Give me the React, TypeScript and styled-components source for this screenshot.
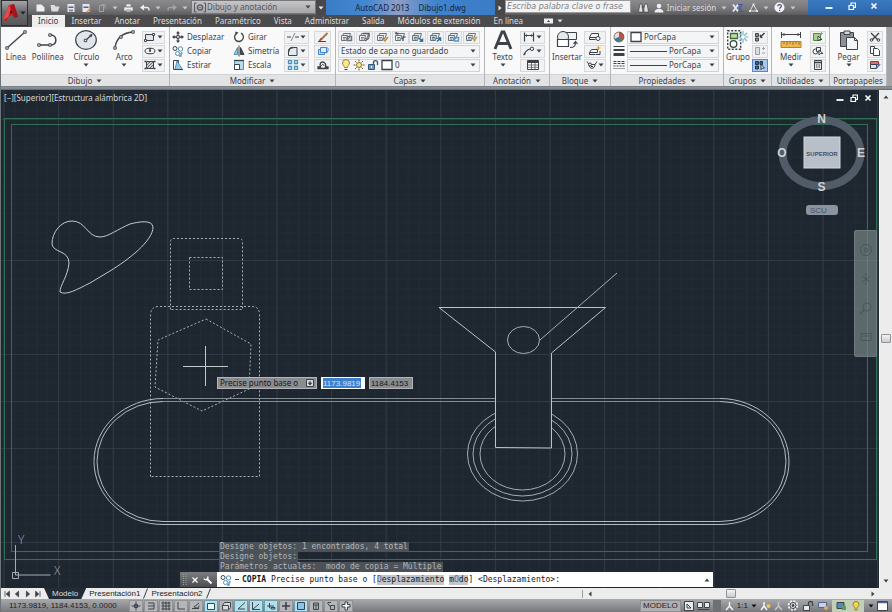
import React from "react";
import styled, { createGlobalStyle, css } from "styled-components";

const UI = `"Noto Sans", "Open Sans", sans-serif`;
const PLAIN = `"Liberation Sans", Arial, sans-serif`;
const MONO = `"DejaVu Sans Mono", monospace`;
const INK = "#3d4248";
const BLUE = "#4f93bd";

const Global = createGlobalStyle`
  * { box-sizing: border-box; }
  html, body { margin: 0; padding: 0; }
  body { font-family: ${UI}; font-size: 8px; line-height: 12px; color: ${INK}; background: #1e2630; }
  button, input, select { font: inherit; color: inherit; margin: 0; padding: 0; border: 0; background: none; border-radius: 0; }
  button { cursor: pointer; }
  svg { display: block; flex: none; }
`;

/* ---------- icons ---------- */

const Svg = ({ w = 14, h = 12, vb, children }: { w?: number; h?: number; vb?: string; children: React.ReactNode }) => (
  <svg width={w} height={h} viewBox={vb ?? `0 0 ${w} ${h}`} fill="none" stroke={INK} strokeWidth="1" aria-hidden="true">
    {children}
  </svg>
);

const Caret = ({ color = INK }: { color?: string }) => (
  <Svg w={6} h={4}>
    <path d="M0.5 0.5h5L3 3.5z" fill={color} stroke="none" />
  </Svg>
);

const icons = {
  line: (
    <Svg w={22} h={20}>
      <path d="M2 18L20 2" strokeWidth="1.3" />
      <path d="M0.8 16.8h2.4v2.4H0.8zM18.8 0.8h2.4v2.4h-2.4z" fill="#fff" />
    </Svg>
  ),
  pline: (
    <Svg w={22} h={20}>
      <path d="M2 15h12c7 0 6-10 0-10" strokeWidth="1.5" />
      <path d="M0.8 13.8h2.4v2.4H0.8zM11.8 13.8h2.4v2.4h-2.4zM11.8 3.8h2.4v2.4h-2.4z" fill="#fff" />
    </Svg>
  ),
  circle: (
    <Svg w={22} h={20}>
      <ellipse cx="11" cy="10" rx="10.3" ry="9.3" fill="#dfe5ea" strokeWidth="1.2" />
      <path d="M10.5 10.5L17 4.5" strokeWidth="1.2" />
      <path d="M17.5 4l-3.5 1 2.5 2.2z" fill={INK} stroke="none" />
      <path d="M9.3 9.3h2.4v2.4H9.3z" fill="#fff" />
    </Svg>
  ),
  arc: (
    <Svg w={22} h={20}>
      <path d="M2 18C3 9 9 3 20 2" strokeWidth="1.4" />
      <path d="M0.8 16.8h2.4v2.4H0.8zM6.8 5.8h2.4v2.4H6.8zM18.8 0.8h2.4v2.4h-2.4z" fill="#fff" />
    </Svg>
  ),
  rect: (
    <Svg w={12} h={10}>
      <path d="M1.5 2.5h8v6h-8z" fill="#dfe5ea" />
      <path d="M0.5 7.5h2v2h-2zM8.5 1.5h2v2h-2z" fill="#fff" />
    </Svg>
  ),
  ellipse: (
    <Svg w={12} h={10}>
      <ellipse cx="6" cy="5" rx="5" ry="2.8" />
      <path d="M6 5V2M5 5h2" strokeWidth="1.5" />
    </Svg>
  ),
  hatch: (
    <Svg w={12} h={10}>
      <path d="M2.5 1.5h7v7h-7z" fill="#c9ced3" />
      <path d="M3 5l3-3M3 8l6-6M6 8l3-3" strokeWidth="0.7" />
      <path d="M0.5 8.5h2M9.5 8.5h2M0.5 1.5h2M9.5 1.5h2" strokeWidth="1.5" />
    </Svg>
  ),
  move: (
    <Svg w={12} h={12}>
      <path d="M6 1v10M1 6h10" strokeWidth="1.3" />
      <path d="M6 0l2 2.5H4zM6 12l2-2.5H4zM0 6l2.5-2v4zM12 6L9.5 4v4z" fill={INK} stroke="none" />
      <path d="M4.7 4.7h2.6v2.6H4.7z" fill="#fff" />
    </Svg>
  ),
  copy: (
    <Svg w={12} h={12}>
      <circle cx="3" cy="3.5" r="2" />
      <circle cx="8.5" cy="4" r="2.2" stroke={BLUE} />
      <circle cx="5.5" cy="8.5" r="2" stroke={BLUE} />
      <path d="M9 8v3h-2M9 8h1.5" stroke={BLUE} strokeWidth="1.3" />
    </Svg>
  ),
  stretch: (
    <Svg w={12} h={12}>
      <path d="M1.5 1.5h5v9h-5z" />
      <path d="M5 2l5.5 8.5H3z" fill="#9cc7dd" stroke={BLUE} />
      <path d="M2 10.5h9" />
    </Svg>
  ),
  rotate: (
    <Svg w={12} h={12}>
      <path d="M8 2.2A4.4 4.4 0 1 1 3.5 2.5" strokeWidth="1.3" />
      <path d="M2 0.5l3.5 1L3 4z" fill={INK} stroke="none" />
    </Svg>
  ),
  mirror: (
    <Svg w={12} h={12}>
      <path d="M4.5 2.5v7H1z" fill="#9cc7dd" stroke={BLUE} />
      <path d="M7.5 2.5v7H11z" fill="#40505c" />
      <path d="M6 0.5v11" />
    </Svg>
  ),
  scale: (
    <Svg w={12} h={12}>
      <path d="M1.5 1.5h9v9h-9z" fill="#b9dbe8" stroke={BLUE} />
      <path d="M1.5 5.5h5v5h-5z" fill="#fff" />
      <path d="M1 1.5h10" strokeWidth="1.3" />
    </Svg>
  ),
  trim: (
    <Svg w={12} h={10}>
      <path d="M0 5h4M8 5h4" strokeWidth="1.2" />
      <path d="M4 9l4-8" stroke="#7b8792" />
    </Svg>
  ),
  fillet: (
    <Svg w={12} h={10}>
      <path d="M1.5 9.5V6c0-3 2-4.5 5-4.5h3.5v8z" fill="#e4e9ed" />
      <path d="M1.5 6c0-3 2-4.5 5-4.5" strokeWidth="1.4" />
    </Svg>
  ),
  array: (
    <Svg w={12} h={10}>
      <path d="M1.5 0.5h3v3h-3zM7.5 0.5h3v3h-3zM1.5 6.5h3v3h-3zM7.5 6.5h3v3h-3z" stroke={BLUE} strokeWidth="1.3" />
    </Svg>
  ),
  erase: (
    <Svg w={12} h={10}>
      <path d="M10.5 1L4 7.5" stroke="#a9764a" strokeWidth="2" />
      <path d="M4.5 6.5L2.5 9" stroke="#b34545" strokeWidth="2" />
      <path d="M1 9.5h8" />
    </Svg>
  ),
  explode: (
    <Svg w={12} h={10}>
      <path d="M1.5 3.5h6v5h-6z" fill="#bcdcf0" stroke="#3e86c8" />
      <path d="M3.5 1.5h6v5h-6z" fill="#dceefa" stroke="#3e86c8" />
      <path d="M10.5 1.500c1.500 2 0 5-1.500 6" stroke="#3e86c8" />
    </Svg>
  ),
  offset: (
    <Svg w={12} h={10}>
      <path d="M1 8.5h10V7H8.5c1-3-1-5-3-5s-3 2-2 5H1z" strokeWidth="1.3" />
      <path d="M4.500 6c0-2 2.500-2 2.500 0" />
    </Svg>
  ),
  bulb: (
    <Svg w={10} h={12}>
      <path d="M3.5 8.5C3.5 7 1.5 6 1.5 4a3.5 3.5 0 0 1 7 0c0 2-2 3-2 4.5z" fill="#fbe88a" stroke="#8f8a4a" />
      <path d="M3.5 10.5h3" />
    </Svg>
  ),
  sun: (
    <Svg w={12} h={12}>
      <circle cx="6" cy="6" r="2.5" fill="#fbe88a" stroke="#8a7530" />
      <path d="M6 0.5v2M6 9.5v2M0.5 6h2M9.5 6h2M2 2l1.5 1.5M8.5 8.5L10 10M10 2L8.5 3.5M3.5 8.5L2 10" stroke="#6e6030" />
    </Svg>
  ),
  lock: (
    <Svg w={12} h={12}>
      <path d="M1.5 5.5h6v5h-6z" fill="#6f9bc0" stroke="#37566f" />
      <path d="M6.5 5V3.5c0-2.5 4-2.5 4 0V6" strokeWidth="1.3" stroke="#37566f" />
      <path d="M4.5 7v2" stroke="#fff" />
    </Svg>
  ),
  swatch: (
    <Svg w={12} h={12}>
      <path d="M1 1.5h10v9H1z" fill="#fff" strokeWidth="1.3" />
    </Svg>
  ),
  textA: (
    <Svg w={22} h={20}>
      <path d="M3 19L10 2h2l7 17M6 13.500h10" strokeWidth="2.8" />
    </Svg>
  ),
  dim: (
    <Svg w={12} h={10}>
      <path d="M1.5 0.5v9M10.5 0.5v9M1.5 3.5h9" strokeWidth="1.2" />
      <path d="M2 3.5l2-1.5v3zM10 3.5L8 2v3z" fill={INK} stroke="none" />
    </Svg>
  ),
  leader: (
    <Svg w={12} h={10}>
      <path d="M1 9C2 6 3 4 7 3" strokeWidth="1.2" />
      <circle cx="9" cy="2.8" r="1.7" />
      <path d="M0.500 9.500l.5-3 2 1.5z" fill={INK} stroke="none" />
    </Svg>
  ),
  table: (
    <Svg w={12} h={10}>
      <path d="M0.5 0.5h11v9h-11z" fill="#fff" />
      <path d="M1 2h10" strokeWidth="2" />
      <path d="M1 5h10M1 7.300h10M4.5 3v6M8 3v6" strokeWidth="0.700" />
    </Svg>
  ),
  insert: (
    <Svg w={22} h={20}>
      <path d="M8.5 2.5h12v7h-12z" fill="#f2f3f4" />
      <circle cx="7" cy="7" r="5.500" fill="#e4e9ed" />
      <path d="M1.500 9.500h11v7h-11z" fill="#fff" strokeWidth="1.200" />
      <path d="M14 17.500c4 0 5.500-1 5.500-5M17.500 14l2-2.500 2 2.500" strokeWidth="1.200" />
    </Svg>
  ),
  blockA: (
    <Svg w={12} h={10}>
      <path d="M2.500 1.500h7v4h-9z" fill="#f2f3f4" />
      <circle cx="9" cy="6.500" r="2" fill="#fff" />
      <path d="M0.500 5.500v2h6" />
    </Svg>
  ),
  blockB: (
    <Svg w={12} h={10}>
      <path d="M2.500 3.500h6v3h-8z" fill="#f2f3f4" />
      <path d="M7 8.500h4V5M0.500 6.500v2h6" />
      <path d="M9.500 0v4M7.500 2h4" stroke="#d79a2b" />
    </Svg>
  ),
  blockC: (
    <Svg w={12} h={10}>
      <path d="M1 1.500l2 3h6l2-3M3 4.500c0 5 6 5 6 0M5 6.500h2" />
      <circle cx="4" cy="4.500" r="1.500" fill="#d9dee2" />
    </Svg>
  ),
  wheel: (
    <Svg w={12} h={12}>
      <circle cx="6" cy="6" r="5" fill="#4d8a55" stroke="none" />
      <path d="M6 6V1a5 5 0 0 1 4.500 7z" fill="#cf4a3f" stroke="none" />
      <path d="M6 6L1.500 8A5 5 0 0 1 6 1z" fill="#e4dfda" stroke="none" />
      <path d="M6 6L1.500 8a5 5 0 0 0 5 3z" fill="#4873a8" stroke="none" />
      <circle cx="6" cy="6" r="5" stroke="#6a5a55" strokeWidth="0.700" />
    </Svg>
  ),
  weight: (
    <Svg w={12} h={12}>
      <path d="M0.500 1.500h11" />
      <path d="M0.500 5h11" strokeWidth="2" />
      <path d="M0.500 9.500h11" strokeWidth="3" />
    </Svg>
  ),
  ltype: (
    <Svg w={12} h={12}>
      <path d="M0.500 2.500h11M0.500 4.500h11" strokeDasharray="3 1" />
      <path d="M0.500 7h11" strokeDasharray="2 1" />
      <path d="M0.500 9.500h11" strokeDasharray="1 1" />
    </Svg>
  ),
  group: (
    <Svg w={22} h={20}>
      <path d="M0.700 0.700h13v18.600h-13z" strokeDasharray="2 1.500" strokeWidth="1.400" />
      <path d="M3.500 3.500h7v5h-7z" fill="#bfe0a5" stroke="#3f6a38" strokeWidth="1.300" />
      <circle cx="6.500" cy="14" r="3.300" strokeWidth="1.300" />
      <path d="M16 1v12M10.500 7h11M12 3l8 8M20 3l-8 8" stroke="#7cb8c9" strokeWidth="1.200" />
      <circle cx="16" cy="7" r="1.800" fill="#fff" stroke="none" />
    </Svg>
  ),
  ungroup: (
    <Svg w={12} h={10}>
      <path d="M1.500 1.500h3v3h-3zM1.500 6h3v3h-3z" fill="#8b9196" />
      <path d="M10.500 1L6 5.500M6 3l2 3" strokeWidth="1.500" />
    </Svg>
  ),
  groupEdit: (
    <Svg w={12} h={10}>
      <path d="M1.500 1.500h4v7h-4z" stroke="#9aa0a5" fill="#d9dcdf" />
      <path d="M8 2.500h3M8 7h3M9.500 1v3" stroke="#9aa0a5" />
    </Svg>
  ),
  groupSel: (
    <Svg w={12} h={10}>
      <path d="M1.500 1.500h3v3h-3zM1.500 6h3v3h-3zM6 1.500h2.500v3H6z" fill="#48607e" stroke="#24364c" />
      <path d="M7 4.500v5l1.500-1.500h2z" fill="#fff" stroke="#24364c" />
    </Svg>
  ),
  measure: (
    <Svg w={22} h={20}>
      <path d="M1.500 2v6M20.500 2v6M2 4.500h18" />
      <path d="M1.500 4.500l3-1.500v3zM20.500 4.500l-3-1.500v3z" fill={INK} stroke="none" />
      <path d="M1 11.500h20v6H1z" fill="#efb84c" stroke="#b9822a" />
      <path d="M4 12v2M7 12v3M10 12v2M13 12v3M16 12v2M19 12v3" stroke="#8a5e18" strokeWidth="0.800" />
    </Svg>
  ),
  qselect: (
    <Svg w={12} h={10}>
      <path d="M1.500 1.500h7v7h-7z" fill="#a9d08e" stroke="#4f8a3c" />
      <path d="M6 4v5l1.500-1.500H10z" fill="#fff" />
      <path d="M9.500 0v3M8 1.500h3" stroke="#d79a2b" />
    </Svg>
  ),
  selectAll: (
    <Svg w={12} h={10}>
      <circle cx="3.500" cy="5.500" r="2.500" />
      <path d="M4.500 1.500h4v4h-4z" fill="#eef0f2" />
      <path d="M7 4v5l1.500-1.500H11z" fill="#fff" />
    </Svg>
  ),
  calc: (
    <Svg w={12} h={10}>
      <path d="M2.500 0.500h7v9h-7z" fill="#e4e7ea" />
      <path d="M3 2.500h6" strokeWidth="1.500" />
      <path d="M4 5h4M4 7h4" strokeDasharray="1 0.500" />
    </Svg>
  ),
  paste: (
    <Svg w={22} h={20}>
      <path d="M2.500 2.500h13v14h-13z" fill="#8d9196" />
      <path d="M6 1h6v3.500H6z" fill="#d5d8db" />
      <path d="M8.500 7.500h8l3 3v9h-11z" fill="#f3f4f6" />
      <path d="M16.500 7.500v3h3" />
    </Svg>
  ),
  cut: (
    <Svg w={12} h={10}>
      <path d="M2 1l7 7M10 1L3 8" strokeWidth="1.400" />
      <circle cx="2.500" cy="8" r="1.300" />
      <circle cx="9.500" cy="8" r="1.300" />
    </Svg>
  ),
  copyClip: (
    <Svg w={12} h={10}>
      <path d="M1.500 0.500h4v7h-4z" fill="#fff" />
      <path d="M4.500 2.500h4l2 2v5h-6z" fill="#fff" />
    </Svg>
  ),
  matchProp: (
    <Svg w={12} h={10}>
      <path d="M1.500 1.500h8v3h-8z" fill="#d8726a" stroke="#8c3d38" />
      <path d="M1.500 4.500h6v4h-6z" fill="#d9e4ee" />
      <path d="M11 4L7 8.500" stroke="#4a79b5" strokeWidth="1.800" />
    </Svg>
  ),
};

const layers: { name: string; mark: string; accent: string; sheet?: string }[] = [
  { name: "Propiedades de capas", mark: "M7.500 4.500h4v4h-4z", accent: "#6d757c" },
  { name: "Aislar", mark: "M5 1.500h6v4M7 9l4-3", accent: "#55606a" },
  { name: "Hacer objeto actual", mark: "M7 7l2 2 3-4", accent: "#c8872b" },
  { name: "Igualar capa", mark: "M1 1.500h4M1 1.500l2-1M9 9V5h2.500", accent: "#55606a" },
  { name: "Inutilizar capa", mark: "M8 6l3 3M11.500 6.500v3h-3", accent: "#2d6f9d", sheet: "#c4e0ea" },
  { name: "Desactivar capa", mark: "M8 9.500L11.500 6M11.500 9V6H9", accent: "#2d6f9d", sheet: "#c4e0ea" },
  { name: "Bloquear capa", mark: "M7.500 5.500h4v3.500h-4z", accent: "#5a95c9", sheet: "#dcecf6" },
  { name: "Desbloquear capa", mark: "M8 5.500h3.500L9.500 9z", accent: "#c4a85a", sheet: "#dcecf6" },
];

const LayerIcon = ({ layer }: { layer: (typeof layers)[number] }) => (
  <Svg w={13} h={10}>
    <path d="M3.500 1.500h7l-1.500 5h-7z" fill="#e9edf0" stroke="#6a727a" />
    <path d="M1.500 3.500h6l-1 5h-5z" fill={layer.sheet ?? "#f5f6f7"} stroke="#6a727a" />
    <path d="M3 5.500h3M3 7h2.500" strokeWidth="0.700" />
    <path d={layer.mark} stroke={layer.accent} strokeWidth="1.500" />
  </Svg>
);

/* ---------- frame ---------- */

const Shell = styled.div`
  min-height: 100vh;
  display: flex;
  flex-direction: column;
  border-left: 1px solid #6f7479;
  overflow: hidden;
`;

const Header = styled.header`
  display: flex;
  height: 27px;
  background: #4b4b4e;
`;

const AppButton = styled.button`
  width: 27px;
  height: 26px;
  display: flex;
  align-items: center;
  justify-content: center;
  gap: 1px;
  border: 1px solid #2e2e30;
  background: linear-gradient(#a5a5a8, #6c6c70 45%, #58585b);
`;

const HeaderRows = styled.div`
  flex: 1;
  min-width: 0;
`;

const TitleBar = styled.div`
  height: 15px;
  display: flex;
  align-items: stretch;
  background: linear-gradient(#8b8b8e, #77777b 60%, #5b5b5e);
`;

const QuickAccess = styled.div`
  width: 163px;
  padding: 0 3px 0 7px;
  display: flex;
  align-items: center;
  justify-content: space-between;
`;

const IconButton = styled.button`
  display: flex;
  align-items: center;
  justify-content: center;
`;

const Workspace = styled.label`
  width: 125px;
  height: 14px;
  padding: 0 4px 0 2px;
  display: flex;
  align-items: center;
  gap: 1px;
  border: 1px solid #77777a;
  background: linear-gradient(#c6c6c8, #a6a6aa);
  color: #55585c;
`;

const PlainSelect = styled.select`
  appearance: none;
  flex: 1;
  min-width: 0;
  height: 12px;
  line-height: 12px;
  outline: 0;
`;

const DarkArrow = styled.button`
  width: 10px;
  display: flex;
  align-items: center;
  justify-content: center;
  background: #48484b;
`;

const Caption = styled.div`
  flex: 172 1 0;
  display: flex;
  align-items: center;
  justify-content: center;
  gap: 9px;
  color: #14233c;
  white-space: nowrap;
  background: linear-gradient(90deg, #3a7cc4, #4588d2 25%, #8d9ec4 42%, #3f83d0 65%, #3a7cc4);
`;

const Search = styled.input`
  flex: 124 1 0;
  min-width: 0;
  height: 13px;
  padding: 0 1px;
  background: #f3f3f4;
  border: 1px solid #9a9a9d;
  font-family: "DejaVu Sans", sans-serif;
  font-style: italic;
  &::placeholder { color: #7e8084; opacity: 1; }
`;

const Account = styled.div`
  width: 177px;
  padding: 0 12px 0 7px;
  display: flex;
  align-items: center;
  justify-content: space-between;
`;

const SignIn = styled.button`
  display: flex;
  align-items: center;
  gap: 3px;
  color: #dcdcde;
  white-space: nowrap;
`;

const WindowControls = styled.div`
  width: 84px;
  padding: 0 14px 4px 17px;
  display: flex;
  align-items: center;
  justify-content: space-between;
  background: linear-gradient(#3b7ac0, #2c66ab);
`;

const Tabs = styled.nav`
  height: 12px;
  padding-left: 4px;
  display: flex;
  color: #dededf;
`;

const Tab = styled.button<{ $active?: boolean }>`
  height: 12px;
  padding: 0 7px 0 6px;
  white-space: nowrap;
  line-height: 12px;
  ${(p) => p.$active && css`background: #ededee; color: #3a3d41;`}
`;

const TabMenu = styled.button`
  margin-left: 14px;
  display: flex;
  align-items: center;
  gap: 4px;
`;

/* ---------- ribbon ---------- */

const Ribbon = styled.div`
  display: grid;
  grid-template-columns: 169fr 166fr 149fr 65fr 61fr 113fr 48fr 58fr 57fr 5px;
  height: 59px;
  background: #a3a5a8;
`;

const RibbonEdge = styled.div`
  height: 4px;
  background: linear-gradient(#777b80, #8f979f 50%, #59616a);
`;

const Panel = styled.section`
  min-width: 0;
  display: flex;
  flex-direction: column;
  border-right: 1px solid #b4b6b9;
  background: #f9f9fa;
`;

const PanelBody = styled.div`
  height: 47px;
  padding: 3px 4px 2px 2px;
  display: flex;
  justify-content: space-between;
  gap: 2px;
`;

const PanelTitle = styled.div`
  height: 12px;
  padding: 0 3px;
  display: flex;
  align-items: center;
  justify-content: center;
  background: #e2e3e5;
  border-top: 1px solid #d2d3d5;
  white-space: nowrap;
`;

const TitleText = styled.button`
  display: flex;
  align-items: center;
  gap: 4px;
  line-height: 11px;
`;

const BigButton = styled.button<{ $w: number }>`
  width: ${(p) => p.$w}px;
  display: flex;
  flex-direction: column;
  align-items: center;
  justify-content: flex-start;
  white-space: nowrap;
`;

const BigLabel = styled.span`
  height: 13px;
  line-height: 14px;
`;

const Stack = styled.div<{ $w: number }>`
  width: ${(p) => p.$w}px;
  display: grid;
  grid-template-rows: repeat(3, 14px);
  align-items: center;
`;

const SmallButton = styled.button<{ $on?: boolean }>`
  height: 13px;
  padding: 0 1px;
  display: flex;
  align-items: center;
  justify-content: space-evenly;
  background: ${(p) => (p.$on ? "#a9c8ef" : "#f1f2f3")};
  border: 1px solid ${(p) => (p.$on ? "#5c86bd" : "#d6d8db")};
`;

const Command = styled.button`
  height: 14px;
  display: flex;
  align-items: center;
  gap: 3px;
  white-space: nowrap;
`;

const Grow = styled.div`
  flex: 1;
  min-width: 0;
  display: grid;
  grid-template-rows: repeat(3, 14px);
  align-items: center;
`;

const IconRow = styled.div`
  display: flex;
  justify-content: space-between;
`;

const Combo = styled.label`
  height: 13px;
  padding: 0 3px 0 2px;
  display: flex;
  align-items: center;
  gap: 2px;
  border: 1px solid #d0d2d5;
  background: #f4f5f6;
`;

const WeightLine = styled.span`
  flex: 1;
  height: 1px;
  background: #3d4248;
`;

const FitSelect = styled(PlainSelect)`
  flex: none;
  width: 38px;
`;

/* ---------- drawing area ---------- */

const Workarea = styled.div`
  flex: 1;
  display: flex;
  min-height: 0;
`;

const Canvas = styled.main`
  position: relative;
  flex: 1;
  min-width: 0;
  overflow: hidden;
  background: #1e2630;
`;

const Drawing = styled.svg`
  width: 100%;
  height: 100%;
`;

const ViewLabel = styled.button`
  position: absolute;
  left: 3px;
  top: 2px;
  color: #d4d8dc;
  white-space: nowrap;
`;

const DocControls = styled.div`
  position: absolute;
  top: 4px;
  right: 7px;
  display: flex;
  gap: 6px;
`;

const ViewCube = styled.div`
  position: absolute;
  top: 22px;
  right: 12px;
  width: 90px;
  display: flex;
  flex-direction: column;
  align-items: center;
  gap: 11px;
`;

const UcsButton = styled.button`
  width: 32px;
  height: 10px;
  line-height: 9px;
  padding-left: 4px;
  text-align: left;
  font-family: ${PLAIN};
  border-radius: 3px;
  background: #8b93a0;
  color: #4a525e;
`;

const NavBar = styled.div`
  position: absolute;
  top: 140px;
  right: 2px;
  width: 23px;
  height: 127px;
  padding: 12px 0;
  display: flex;
  flex-direction: column;
  align-items: center;
  justify-content: space-between;
  border-radius: 2px;
  border: 1px solid #6c7a7c;
  background: rgba(118, 134, 134, 0.7);
`;

const Prompt = styled.div`
  position: absolute;
  left: 216px;
  top: 287px;
  display: flex;
  gap: 4px;
`;

const PromptText = styled.div`
  width: 100px;
  height: 12px;
  padding: 0 2px;
  display: flex;
  align-items: center;
  justify-content: space-between;
  white-space: nowrap;
  line-height: 10px;
  border: 1px solid #b4b5b8;
  background: #8b8c90;
  color: #14171b;
`;

const Coord = styled.input<{ $selected?: boolean }>`
  width: 44px;
  height: 12px;
  padding: 0 1px;
  line-height: 10px;
  font-family: ${PLAIN};
  color: #14171b;
  border: 1px solid #b4b5b8;
  background: #8b8c90;
  ${(p) =>
    p.$selected &&
    css`
      padding: 0 3px 0 1px;
      color: #d5e6f8;
      border-color: #fff;
      background: linear-gradient(#3f80cc, #3f80cc) content-box, #fff;
    `}
`;

const CommandLine = styled.div`
  position: absolute;
  left: 179px;
  right: 166px;
  bottom: 1px;
  font-family: ${MONO};
`;

const History = styled.div`
  padding-left: 39px;
  display: flex;
  flex-direction: column;
  align-items: flex-start;
`;

const HistoryLine = styled.span`
  height: 10px;
  line-height: 10px;
  padding: 0 1px;
  white-space: pre;
  color: #b3b7ba;
  background: #4c5257;
`;

const CommandRow = styled.div`
  height: 15px;
  display: flex;
  background: #fff;
  color: #15181c;
`;

const CommandGrip = styled.div`
  width: 37px;
  padding: 0 4px 0 3px;
  display: flex;
  align-items: center;
  justify-content: space-between;
  background: linear-gradient(#7b7d80, #4b4d50);
`;

const CommandText = styled.div`
  flex: 1;
  min-width: 0;
  padding: 0 3px;
  display: flex;
  align-items: center;
  gap: 3px;
  white-space: pre;
`;

const Option = styled.button`
  background: #c3c5c9;
  line-height: 10px;
`;

const Key = styled.span`
  color: #4668b4;
`;

const Space = styled.div<{ $n: number }>`
  flex: ${(p) => p.$n} 1 0;
`;

const VScroll = styled.div`
  width: 13px;
  padding: 5px 0;
  display: flex;
  flex-direction: column;
  align-items: center;
  background: #ececed;
  border-left: 1px solid #f8f8f8;
`;

const Thumb = styled.div`
  width: 10px;
  height: 9px;
  border: 1px solid #8f9297;
  border-radius: 1px;
  background: linear-gradient(#f4f4f5, #c9cbcf);
`;

/* ---------- bottom bars ---------- */

const LayoutRow = styled.div`
  height: 11px;
  display: flex;
  align-items: stretch;
  font-family: ${PLAIN};
  background: #ececed;
  color: #1b1e23;
`;

const PageNav = styled.div`
  width: 43px;
  padding: 0 2px;
  display: flex;
  align-items: center;
  justify-content: space-between;
`;

const LayoutTab = styled.button<{ $active?: boolean }>`
  height: 11px;
  line-height: 11px;
  padding: 0 3px;
  white-space: nowrap;
  ${(p) =>
    p.$active &&
    css`
      padding: 0 8px;
      color: #d9dde1;
      background: #232b35;
      clip-path: polygon(0 0, 100% 0, calc(100% - 5px) 100%, 5px 100%);
    `}
`;

const HScroll = styled.div`
  width: 310px;
  padding: 0 17px 0 0;
  display: flex;
  align-items: center;
`;

const StatusBar = styled.footer`
  height: 13px;
  display: flex;
  align-items: center;
  font-family: ${PLAIN};
  color: #1f2226;
  background: linear-gradient(#a9aaae, #77787c);
`;

const Coordinates = styled.div`
  width: 128px;
  padding-left: 8px;
  white-space: nowrap;
`;

const Toggle = styled.button<{ $on?: boolean }>`
  width: 14px;
  height: 12px;
  margin-right: 1px;
  display: flex;
  align-items: center;
  justify-content: center;
  border: 1px solid ${(p) => (p.$on ? "#6e9cab" : "#909296")};
  background: ${(p) => (p.$on ? "#b4e0ec" : "#b5b6b9")};
`;

const StatusRight = styled.div`
  width: 252px;
  padding-right: 4px;
  display: flex;
  align-items: center;
  justify-content: space-between;
`;

const ModelButton = styled.button`
  height: 12px;
  padding: 0 2px;
  line-height: 10px;
  border: 1px solid #8d8f93;
  background: #aeafb3;
`;

const ScaleButton = styled.button`
  display: flex;
  align-items: center;
  gap: 3px;
`;

const Tray = styled.div`
  width: 32px;
  height: 12px;
  display: flex;
  align-items: center;
  justify-content: space-evenly;
  background: #c3cfb6;
`;

/* ---------- data ---------- */

const tabs = ["Inicio", "Insertar", "Anotar", "Presentación", "Paramétrico", "Vista", "Administrar", "Salida", "Módulos de extensión", "En línea"];

const quick: [string, React.ReactNode][] = [
  ["Nuevo", <path key="a" d="M1.5 1.5h5l3 3v4h-8z" fill="#eee" stroke="none" />],
  ["Abrir", <path key="b" d="M0.5 2h4l1 1.5h4L8 8.5H1.5z" fill="#ddd" stroke="none" />],
  ["Guardar", <g key="c" stroke="none"><path d="M1.5 1h7v8h-7z" fill="#e4e8ee" /><path d="M2.5 3.5h5V5h-5z" fill="#4b648c" /><path d="M3 6.5h4v2H3z" fill="#888" /></g>],
  ["Guardar como", <g key="d" stroke="none"><path d="M1.5 1h7v8h-7z" fill="#e4e8ee" /><path d="M2.5 3.5h5V5h-5z" fill="#4b648c" /><path d="M5 9l4-4 1 1-4 4z" fill="#e0863a" /></g>],
  ["Publicar", <path key="e" d="M2.5 2.5h4v6h-4zM5 1.5h3v4" stroke="#a3a4a7" />],
];

const navigators: [string, string][] = [
  ["Primera", "M2.5 1.5v7M8 1.5L4 5l4 3.5z"],
  ["Anterior", "M7 1.5L3 5l4 3.5z"],
  ["Siguiente", "M3 1.5L7 5 3 8.5z"],
  ["Última", "M7.5 1.5v7M2 1.5L6 5 2 8.5z"],
];

const toggles: { name: string; on?: boolean; d: string; fill?: string }[] = [
  { name: "Inferir restricciones", d: "M5 0.500v9M0.500 5h9M3.500 3.500h3v3h-3z" },
  { name: "Forzcursor", d: "M2 2h6M2 5h6M2 8h6M8 2v6" },
  { name: "Rejilla", d: "M0.500 2h9M0.500 5h9M0.500 8h9M2 0.500v9M5 0.500v9M8 0.500v9" },
  { name: "Orto", d: "M2 1v7h7" },
  { name: "Polar", d: "M1 7.500h7M8 2L3 6M3 5.500a2.500 2 0 1 0 5-1" },
  { name: "Refent", on: true, d: "M1.500 2.500h7v6h-7z", fill: "#e7f7fb" },
  { name: "3dRefent", d: "M1.500 4.500l2-3h6v5l-2 2.500h-6zM1.500 4.500h6v4", fill: "#dcdde0" },
  { name: "Rastreo", on: true, d: "M9 1.500L2 8h7" },
  { name: "SCP dinámico", on: true, d: "M1.500 1v7.500H9M1.500 8.500L8 3" },
  { name: "Entrada dinámica", on: true, d: "M3.500 2v5M1 5h7M5 6.500h4V8H5z" },
  { name: "Grosor", d: "M5 1v8M1 5h8" },
  { name: "Transparencia", on: true, d: "M1.500 1.500h7v7h-7z", fill: "#8cc3ee" },
  { name: "Propiedades rápidas", d: "M2.500 2h5v6.500h-5zM2.500 4h5M5 4v4" },
  { name: "Ciclo de selección", d: "M1 1.500l3 4M2 1.500h3M4.500 4.500h4v4h-4z" },
  { name: "Supervisor", d: "M4 1h2.500v2.500H9V6H6.500v3H4V6H1V3.500h3z", fill: "#f4f4f5" },
];

/* ---------- parts ---------- */

const Small = ({ icon, name, menu, on }: { icon: React.ReactNode; name: string; menu?: boolean; on?: boolean }) => (
  <SmallButton aria-label={name} $on={on}>
    {icon}
    {menu && <Caret />}
  </SmallButton>
);

const Big = ({ icon, label, w, menu }: { icon: React.ReactNode; label: string; w: number; menu?: boolean }) => (
  <BigButton $w={w}>
    {icon}
    <BigLabel>{label}</BigLabel>
    {menu && <Caret />}
  </BigButton>
);

const Title = ({ children, plain }: { children: string; plain?: boolean }) => (
  <PanelTitle>
    <TitleText>
      {children}
      {!plain && <Caret />}
    </TitleText>
  </PanelTitle>
);

const Grid = () => (
  <>
    <defs>
      <pattern id="minor" x="3.5" y="119" width="10.92" height="9.4" patternUnits="userSpaceOnUse">
        <path d="M0.5 0v9.4M0 0.5h10.92" stroke="#222b35" fill="none" />
      </pattern>
      <pattern id="major" x="3.5" y="119" width="54.6" height="47" patternUnits="userSpaceOnUse">
        <path d="M0.5 0v47M0 0.5h54.6" stroke="#303a44" fill="none" />
      </pattern>
      <clipPath id="around">
        <path clipRule="evenodd" d="M0 90h892v520H0zM495.5 352h56v95.5h-56z" />
      </clipPath>
    </defs>
    <rect x="0" y="90" width="892" height="520" fill="url(#minor)" stroke="none" />
    <rect x="0" y="90" width="892" height="520" fill="url(#major)" stroke="none" />
  </>
);

const WindowGlyphs = ({ names }: { names: string }) => (
  <>
    <IconButton aria-label={`Minimizar ${names}`}>
      <Svg w={8} h={8}><path d="M0.5 6h7" stroke="#fff" strokeWidth="1.8" /></Svg>
    </IconButton>
    <IconButton aria-label={`Restaurar ${names}`}>
      <Svg w={8} h={8}><path d="M1 3.5h4.5v4H1zM3 3V1h4.5v4.5H6" stroke="#fff" strokeWidth="1.2" /></Svg>
    </IconButton>
    <IconButton aria-label={`Cerrar ${names}`}>
      <Svg w={8} h={8}><path d="M1.5 1.5l5 5M6.5 1.5l-5 5" stroke="#fff" strokeWidth="1.6" /></Svg>
    </IconButton>
  </>
);

export default function App() {
  return (
    <Shell>
      <Global />
      <Header>
        <AppButton aria-label="Menú de la aplicación">
          <Svg w={16} h={20}>
            <path d="M0 17L6 2l5-1 4 13-4 1-1-3-5 2-1 4z" fill="#c51f25" stroke="none" />
            <path d="M6 2l2 6-3 6-5 3z" fill="#ea4a47" stroke="none" />
            <path d="M11 1l4 13-4 1L8 3z" fill="#a5151c" stroke="none" />
            <path d="M8 6l1.5 4-3 .8z" fill="#66090d" stroke="none" />
          </Svg>
          <Caret color="#222" />
        </AppButton>
        <HeaderRows>
          <TitleBar>
            <QuickAccess>
              {quick.map(([name, art]) => (
                <IconButton key={name} aria-label={name}><Svg w={10} h={10}>{art}</Svg></IconButton>
              ))}
              <Caret color="#c9c9cb" />
              <IconButton aria-label="Imprimir">
                <Svg w={11} h={10}><path d="M3 1h5v3H3zM1 4h9v4H1zM3 7h5v2H3z" fill="#eee" stroke="#77777b" strokeWidth="0.6" /></Svg>
              </IconButton>
              <IconButton aria-label="Deshacer">
                <Svg w={10} h={8}><path d="M2 3.5h5c2 0 2 1 2 3" stroke="#eee" strokeWidth="1.5" /><path d="M0 3.5l4-3v6z" fill="#eee" stroke="none" /></Svg>
              </IconButton>
              <Caret color="#c9c9cb" />
              <IconButton aria-label="Rehacer">
                <Svg w={10} h={8}><path d="M8 3.5H3c-2 0-2 1-2 3" stroke="#a3a4a7" strokeWidth="1.5" /><path d="M10 3.5l-4-3v6z" fill="#a3a4a7" stroke="none" /></Svg>
              </IconButton>
              <Caret color="#c9c9cb" />
            </QuickAccess>
            <Workspace>
              <Svg w={12} h={11}>
                <path d="M2.5 1h-2v9h2M9.5 1h2v9h-2" stroke="#55585c" />
                <circle cx="6" cy="5.5" r="2.6" stroke="#55585c" strokeWidth="1.3" />
                <circle cx="6" cy="5.5" r="0.8" fill="#55585c" stroke="none" />
              </Svg>
              <PlainSelect aria-label="Espacio de trabajo"><option>Dibujo y anotación</option></PlainSelect>
              <Caret />
            </Workspace>
            <DarkArrow aria-label="Personalizar"><Caret color="#eee" /></DarkArrow>
            <Caption><span>AutoCAD 2013</span><span>Dibujo1.dwg</span></Caption>
            <DarkArrow aria-label="Contraer búsqueda">
              <Svg w={4} h={6}><path d="M0.5 0.5v5L3.5 3z" fill="#eee" stroke="none" /></Svg>
            </DarkArrow>
            <Search aria-label="Buscar" placeholder="Escriba palabra clave o frase" />
            <Account>
              <IconButton aria-label="Buscar ayuda">
                <Svg w={11} h={10}><path d="M2 1h2v3l1 5H0.5zM7 1h2l1.5 8H6V4zM4 4h3" fill="#e4e4e6" stroke="#3a3a3d" strokeWidth="0.6" /></Svg>
              </IconButton>
              <SignIn>
                <Svg w={10} h={10}><circle cx="5" cy="3" r="2.3" fill="#eee" stroke="none" /><path d="M0.5 9.5c0-5 9-5 9 0z" fill="#eee" stroke="none" /></Svg>
                Iniciar sesión
              </SignIn>
              <Caret color="#c9c9cb" />
              <IconButton aria-label="Exchange">
                <Svg w={11} h={10}><path d="M1 1.5l5 7M1 8.5l5-7" stroke="#dfe6fa" strokeWidth="1.8" /><path d="M6 1.5h4L7.5 5l2.500 3.500H6" stroke="#4256a8" strokeWidth="1.2" /></Svg>
              </IconButton>
              <IconButton aria-label="Autodesk 360">
                <Svg w={11} h={10}><path d="M5.5 1.5L9 8H2z" stroke="#e4e4e6" /><path d="M4.5 0.5h2v2h-2zM1 7h2v2H1zM8 7h2v2H8z" fill="#e4e4e6" stroke="none" /></Svg>
              </IconButton>
              <Caret color="#c9c9cb" />
              <IconButton aria-label="Ayuda">
                <Svg w={11} h={11}><circle cx="5.5" cy="5.5" r="5" fill="#f3f3f6" stroke="none" /><path d="M3.8 4.3c0-2.400 3.600-2.200 3.600 0 0 1.200-1.800 1.200-1.800 2.500M5.600 7.700v1.200" stroke="#44507c" strokeWidth="1.2" /></Svg>
              </IconButton>
              <Caret color="#c9c9cb" />
            </Account>
            <WindowControls><WindowGlyphs names="AutoCAD" /></WindowControls>
          </TitleBar>
          <Tabs>
            {tabs.map((t, i) => <Tab key={t} $active={i === 0}>{t}</Tab>)}
            <TabMenu aria-label="Minimizar cinta">
              <Svg w={9} h={6}><path d="M0 0.5h9v5H0z" fill="#eee" stroke="none" /><path d="M3 4l1.5-2L6 4z" fill="#444" stroke="none" /></Svg>
              <Caret color="#ddd" />
            </TabMenu>
          </Tabs>
        </HeaderRows>
      </Header>

      <Ribbon>
        <Panel>
          <PanelBody>
            <Big icon={icons.line} label="Línea" w={26} />
            <Big icon={icons.pline} label="Polilínea" w={34} />
            <Big icon={icons.circle} label="Círculo" w={40} menu />
            <Big icon={icons.arc} label="Arco" w={32} menu />
            <Stack $w={23}>
              <Small icon={icons.rect} name="Rectángulo" menu />
              <Small icon={icons.ellipse} name="Elipse" menu />
              <Small icon={icons.hatch} name="Sombreado" menu />
            </Stack>
          </PanelBody>
          <Title>Dibujo</Title>
        </Panel>

        <Panel>
          <PanelBody>
            <Stack $w={56}>
              <Command>{icons.move}Desplazar</Command>
              <Command>{icons.copy}Copiar</Command>
              <Command>{icons.stretch}Estirar</Command>
            </Stack>
            <Stack $w={46}>
              <Command>{icons.rotate}Girar</Command>
              <Command>{icons.mirror}Simetría</Command>
              <Command>{icons.scale}Escala</Command>
            </Stack>
            <Stack $w={25}>
              <Small icon={icons.trim} name="Recortar" menu />
              <Small icon={icons.fillet} name="Empalme" menu />
              <Small icon={icons.array} name="Matriz" menu />
            </Stack>
            <Stack $w={17}>
              <Small icon={icons.erase} name="Borrar" />
              <Small icon={icons.explode} name="Descomponer" />
              <Small icon={icons.offset} name="Desfase" />
            </Stack>
          </PanelBody>
          <Title>Modificar</Title>
        </Panel>

        <Panel>
          <PanelBody>
            <Grow>
              <IconRow>
                {layers.map((l) => <Small key={l.name} icon={<LayerIcon layer={l} />} name={l.name} />)}
              </IconRow>
              <Combo>
                <PlainSelect aria-label="Estado de capa"><option>Estado de capa no guardado</option></PlainSelect>
                <Caret />
              </Combo>
              <Combo>
                {icons.bulb}
                {icons.sun}
                {icons.lock}
                {icons.swatch}
                <PlainSelect aria-label="Capa"><option>0</option></PlainSelect>
                <Caret />
              </Combo>
            </Grow>
          </PanelBody>
          <Title>Capas</Title>
        </Panel>

        <Panel>
          <PanelBody>
            <Big icon={icons.textA} label="Texto" w={32} menu />
            <Stack $w={25}>
              <Small icon={icons.dim} name="Cota" menu />
              <Small icon={icons.leader} name="Directriz" menu />
              <Small icon={icons.table} name="Tabla" />
            </Stack>
          </PanelBody>
          <Title>Anotación</Title>
        </Panel>

        <Panel>
          <PanelBody>
            <Big icon={icons.insert} label="Insertar" w={30} />
            <Stack $w={22}>
              <Small icon={icons.blockA} name="Crear bloque" />
              <Small icon={icons.blockB} name="Editar bloque" />
              <Small icon={icons.blockC} name="Editar atributos" menu />
            </Stack>
          </PanelBody>
          <Title>Bloque</Title>
        </Panel>

        <Panel>
          <PanelBody>
            <Stack $w={12}>
              {icons.wheel}
              {icons.weight}
              {icons.ltype}
            </Stack>
            <Grow>
              <Combo>
                {icons.swatch}
                <PlainSelect aria-label="Color"><option>PorCapa</option></PlainSelect>
                <Caret />
              </Combo>
              <Combo>
                <WeightLine />
                <FitSelect aria-label="Grosor de línea"><option>PorCapa</option></FitSelect>
                <Caret />
              </Combo>
              <Combo>
                <WeightLine />
                <FitSelect aria-label="Tipo de línea"><option>PorCapa</option></FitSelect>
                <Caret />
              </Combo>
            </Grow>
          </PanelBody>
          <Title>Propiedades</Title>
        </Panel>

        <Panel>
          <PanelBody>
            <Big icon={icons.group} label="Grupo" w={25} />
            <Stack $w={16}>
              <Small icon={icons.ungroup} name="Desagrupar" />
              <Small icon={icons.groupEdit} name="Editar grupo" />
              <Small icon={icons.groupSel} name="Selección de grupo" on />
            </Stack>
          </PanelBody>
          <Title>Grupos</Title>
        </Panel>

        <Panel>
          <PanelBody>
            <Big icon={icons.measure} label="Medir" w={34} menu />
            <Stack $w={15}>
              <Small icon={icons.qselect} name="Selección rápida" />
              <Small icon={icons.selectAll} name="Seleccionar todo" />
              <Small icon={icons.calc} name="Calculadora" />
            </Stack>
          </PanelBody>
          <Title>Utilidades</Title>
        </Panel>

        <Panel>
          <PanelBody>
            <Big icon={icons.paste} label="Pegar" w={34} menu />
            <Stack $w={15}>
              <Small icon={icons.cut} name="Cortar" />
              <Small icon={icons.copyClip} name="Copiar al portapapeles" />
              <Small icon={icons.matchProp} name="Igualar propiedades" />
            </Stack>
          </PanelBody>
          <Title plain>Portapapeles</Title>
        </Panel>
      </Ribbon>
      <RibbonEdge />

      <Workarea>
        <Canvas>
          <Drawing viewBox="1 90 878 498" preserveAspectRatio="xMinYMin slice" fill="none" stroke="#a4abb1" strokeWidth="1">
            <Grid />
            <g stroke="#2f7055">
              <rect x="4.5" y="118.5" width="872" height="441" />
              <rect x="11.5" y="124.5" width="856" height="427" />
            </g>
            <path d="M72 221C61 221 52 232 52 244C53 253 69 250 69 263C68 276 60 285 60 292C66 296 78 289 90 283L110 271C128 260 153 241 153 227C152 219 138 222 130 224C118 229 108 237 100 237C87 237 86 221 72 221Z" stroke="#c3c8cc" />
            <g strokeDasharray="2 2" stroke="#a9afb5">
              <path d="M170.5 309.5V242q0-3.500 3.500-3.500h65q3.500 0 3.500 3.500v67.500z" />
              <rect x="189.5" y="257.5" width="33" height="32" />
              <path d="M150.5 476.5V314q1-7.500 8-7.500h93q8 0 8 8v162z" />
              <path d="M206 319L251 344L249 389L202 411L155 387L158 340Z" />
            </g>
            <path d="M183 366.5h45M205.5 346v40" stroke="#c3c8cc" />
            <g clipPath="url(#around)">
              <path d="M163 398.5H720M163 401.5H720" stroke="#858d94" />
              <ellipse cx="522.5" cy="454" rx="55" ry="47" />
              <ellipse cx="522.5" cy="454" rx="49.5" ry="42" />
              <ellipse cx="522.5" cy="454" rx="42.5" ry="36" />
            </g>
            <path d="M163 398.5A69 63 0 0 0 163 524.5H720A69 63 0 0 0 720 398.5" stroke="#b4babf" />
            <path d="M163 401.5A66 60 0 0 0 163 521.5H720A66 60 0 0 0 720 401.5" stroke="#b4babf" />
            <path d="M439 307.5H605.5L551.5 353V448L495.5 447.500V352Z" stroke="#bcc2c7" />
            <ellipse cx="523.5" cy="340" rx="16" ry="13.5" />
            <path d="M540 340L617 273" />
            <path d="M15.5 545v30h35M12.5 572.5h6v6h-6z" />
            <g fill="#a4abb1" stroke="none" fontFamily="Open Sans, sans-serif" fontSize="12" fontWeight="300">
              <text x="18" y="544">Y</text>
              <text x="54" y="575">X</text>
            </g>
          </Drawing>

          <ViewLabel>[−][Superior][Estructura alámbrica 2D]</ViewLabel>
          <DocControls><WindowGlyphs names="dibujo" /></DocControls>

          <ViewCube>
            <svg width="90" height="82" viewBox="777 112 90 82" role="img" aria-label="ViewCube">
              <ellipse cx="821.5" cy="153" rx="39" ry="33" fill="none" stroke="#525c68" strokeWidth="8" />
              <rect x="804" y="137" width="36" height="31" fill="#b9bfc9" stroke="#d3d7de" />
              <g fontFamily="Liberation Sans, sans-serif" fontWeight="700" textAnchor="middle">
                <text x="822" y="156" fontSize="6" fill="#48505c">SUPERIOR</text>
                <g fontSize="12" fill="#cdd3d4">
                  <text x="821.5" y="123">N</text>
                  <text x="821.5" y="191">S</text>
                  <text x="782" y="157">O</text>
                  <text x="861" y="157">E</text>
                </g>
              </g>
            </svg>
            <UcsButton>SCU</UcsButton>
          </ViewCube>

          <NavBar>
            <Svg w={14} h={14}><circle cx="7" cy="7" r="5.5" stroke="#4a5759" /><circle cx="7" cy="7" r="2" stroke="#4a5759" /></Svg>
            <Svg w={14} h={14}><path d="M7 1v12M3 4l8 6M11 4l-8 6" stroke="#4a5759" /></Svg>
            <Svg w={14} h={14}><circle cx="8" cy="6" r="4" stroke="#4a5759" /><path d="M5 9l-4 4" stroke="#4a5759" strokeWidth="1.5" /></Svg>
            <Svg w={14} h={14}><path d="M2 3.5h10v7H2zM4 6h6" stroke="#4a5759" /></Svg>
          </NavBar>

          <Prompt>
            <PromptText>
              Precise punto base o
              <Svg w={8} h={8}><path d="M0.5 0.5h7v7h-7z" fill="#d5d6da" /><path d="M4 2v3M2.5 4L4 6l1.5-2z" fill={INK} /></Svg>
            </PromptText>
            <Coord $selected aria-label="Coordenada X" defaultValue="1173.9819" />
            <Coord aria-label="Coordenada Y" defaultValue="1184.4153" />
          </Prompt>

          <CommandLine>
            <History>
              <HistoryLine>Designe objetos: 1 encontrados, 4 total</HistoryLine>
              <HistoryLine>Designe objetos:</HistoryLine>
              <HistoryLine>Parámetros actuales:  modo de copia = Múltiple</HistoryLine>
            </History>
            <CommandRow>
              <CommandGrip>
                <Svg w={4} h={11}><path d="M0.5 0v11M3 0v11" stroke="#9b9da0" strokeDasharray="1 1" /></Svg>
                <IconButton aria-label="Cerrar línea de comandos"><Svg w={8} h={8}><path d="M1.5 1.5l5 5M6.5 1.5l-5 5" stroke="#fff" strokeWidth="1.3" /></Svg></IconButton>
                <IconButton aria-label="Personalizar línea de comandos"><Svg w={10} h={10}><path d="M3.5 3.5l5 5" stroke="#fff" strokeWidth="2" /><path d="M1 3.5a2 2 0 0 0 3 1 2 2 0 0 0 .5-3" stroke="#fff" strokeWidth="1.3" /></Svg></IconButton>
              </CommandGrip>
              <CommandText>
                {icons.copy}
                <Svg w={4} h={4}><path d="M0 1.5h4" /></Svg>
                <span>
                  <b>COPIA</b> Precise punto base o [<Option><Key>D</Key>esplazamiento</Option> <Option>m<Key>O</Key>do</Option>] &lt;Desplazamiento&gt;:
                </span>
                <Space $n={1} />
                <Svg w={6} h={4}><path d="M0.5 3.5h5L3 0.5z" fill={INK} stroke="none" /></Svg>
              </CommandText>
            </CommandRow>
          </CommandLine>
        </Canvas>
        <VScroll>
          <Svg w={6} h={4}><path d="M0.5 3.5h5L3 0.5z" fill={INK} stroke="none" /></Svg>
          <Space $n={235} />
          <Thumb />
          <Space $n={236} />
          <Caret />
        </VScroll>
      </Workarea>

      <LayoutRow>
        <PageNav>
          {navigators.map(([name, d]) => (
            <IconButton key={name} aria-label={name}><Svg w={8} h={8} vb="0 0 10 10"><path d={d} fill={INK} /></Svg></IconButton>
          ))}
        </PageNav>
        <LayoutTab $active>Modelo</LayoutTab>
        <LayoutTab>Presentación1</LayoutTab>
        <Svg w={5} h={11}><path d="M0.5 10.5l4-10" /></Svg>
        <LayoutTab>Presentación2</LayoutTab>
        <Svg w={5} h={11}><path d="M0.5 10.5l4-10" /></Svg>
        <Space $n={1} />
        <HScroll>
          <Svg w={11} h={8}><path d="M0.5 0v8" stroke="#9a9ca0" /><path d="M9.5 1.5v5L6.5 4z" fill={INK} stroke="none" /></Svg>
          <Space $n={133} />
          <Thumb />
          <Space $n={135} />
          <Svg w={4} h={6}><path d="M0.5 0.5v5L3.5 3z" fill={INK} stroke="none" /></Svg>
        </HScroll>
      </LayoutRow>

      <StatusBar>
        <Coordinates>1173.9819, 1184.4153, 0.0000</Coordinates>
        {toggles.map((t) => (
          <Toggle key={t.name} $on={t.on} aria-label={t.name}>
            <Svg w={10} h={10}><path d={t.d} fill={t.fill ?? "none"} strokeWidth={t.name === "Grosor" ? 1.6 : 1} /></Svg>
          </Toggle>
        ))}
        <Space $n={1} />
        <StatusRight>
          <ModelButton>MODELO</ModelButton>
          <IconButton aria-label="Presentación"><Svg w={10} h={10}><path d="M0.5 0.5h9v9h-9z" fill="#e9eaec" /><path d="M3 3v4h4M3 3l4 4" /></Svg></IconButton>
          <IconButton aria-label="Ver presentaciones"><Svg w={13} h={10}><path d="M0.5 1.5h5v5h-5zM7.5 1.5h5v5h-5z" fill="#e9eaec" /><path d="M0.5 8.5h12" /></Svg></IconButton>
          <Svg w={8} h={12}><path d="M0 0h8v12H0z" fill="#6f7074" stroke="none" /></Svg>
          <IconButton aria-label="Escala de anotación"><Svg w={9} h={10}><path d="M4.5 1v4M4.5 5L1 9M4.5 5L8 9" stroke="#f4f4f5" strokeWidth="1.5" /></Svg></IconButton>
          <ScaleButton>1:1<Caret color="#111" /></ScaleButton>
          <IconButton aria-label="Visibilidad de anotación"><Svg w={11} h={10}><path d="M4 1v4M4 5L1 9M4 5l3 4" stroke="#f4f4f5" strokeWidth="1.5" /><circle cx="8.5" cy="5" r="2" fill="#f0c35a" stroke="none" /></Svg></IconButton>
          <IconButton aria-label="Escala automática"><Svg w={9} h={10}><path d="M4.5 1v4M4.5 5L1 9M4.5 5L8 9" stroke="#c4c5c9" strokeWidth="1.5" /></Svg></IconButton>
          <IconButton aria-label="Cambio de espacio de trabajo"><Svg w={12} h={11}><circle cx="6" cy="5.5" r="4" stroke="#f4f4f5" strokeWidth="2.5" strokeDasharray="2 1.1" /><circle cx="6" cy="5.5" r="3" fill="#e4e5e8" /><circle cx="6" cy="5.5" r="1" fill={INK} /></Svg></IconButton>
          <IconButton aria-label="Bloquear interfaz"><Svg w={12} h={11}><path d="M1.5 5.5h6v5h-6z" fill="#e9eaec" /><path d="M6.5 5V3c0-2 4-2 4 0v3" strokeWidth="1.3" /></Svg></IconButton>
          <IconButton aria-label="Aceleración de hardware"><Svg w={12} h={10}><path d="M1.5 1.5h8v5h-8z" fill="#c5d2ea" stroke="#56648a" /><circle cx="9" cy="7" r="2" fill="#e2a764" stroke="none" /></Svg></IconButton>
          <Tray>
            <Svg w={12} h={10}><path d="M1 1.5h7v6H1z" fill="#5b87c2" /><path d="M6 5h4v4H6z" fill="#5aa05a" stroke="none" /></Svg>
            <Svg w={8} h={10}><path d="M3 7C3 5.5 1 5 1 3.5a3 3 0 0 1 6 0C7 5 5 5.5 5 7v2H3z" fill="#f7d94c" stroke="#93802a" /></Svg>
          </Tray>
          <Caret color="#111" />
          <IconButton aria-label="Limpiar pantalla"><Svg w={11} h={10}><path d="M0.5 0.5h10v9h-10z" fill="#fff" /><path d="M1 1.5h9" stroke="#4a64a0" strokeWidth="1.5" /></Svg></IconButton>
        </StatusRight>
      </StatusBar>
    </Shell>
  );
}
